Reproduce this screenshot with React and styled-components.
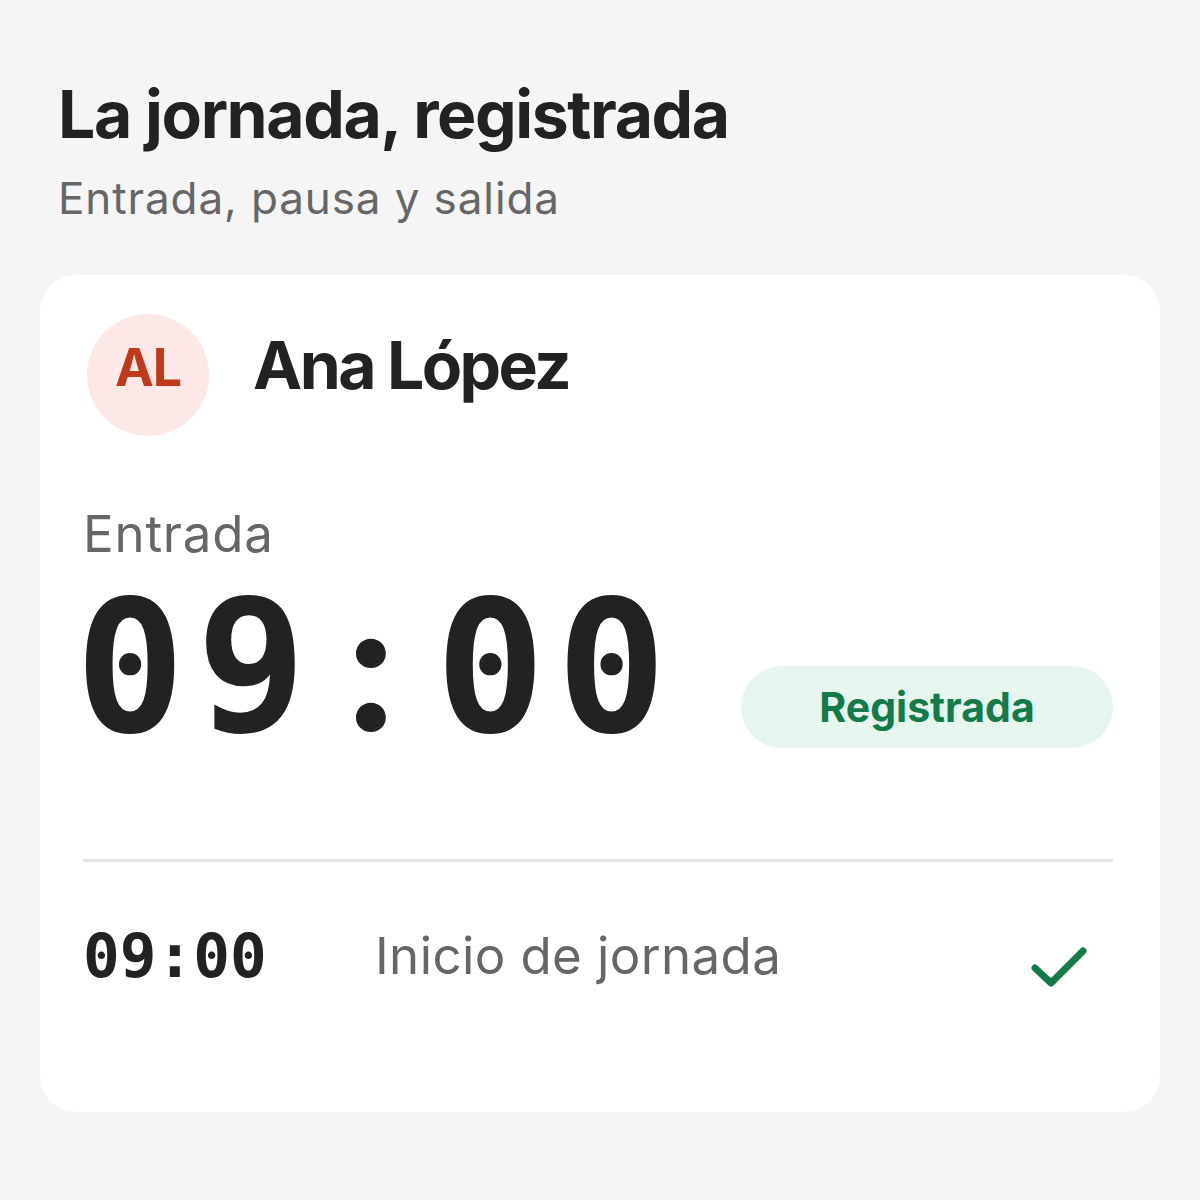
import React from "react";
import styled, { createGlobalStyle } from "styled-components";

const Global = createGlobalStyle`
  html, body {
    margin: 0;
    padding: 0;
    background: #f5f5f5;
  }
  body {
    font-family: "Inter", "Open Sans", sans-serif;
    color: #222;
  }
`;

const Page = styled.div`
  width: 1200px;
  min-height: 1200px;
  box-sizing: border-box;
  padding: 72px 40px 0 40px;
`;

const Title = styled.h1`
  margin: 0 0 0 18px;
  font-size: 66px;
  font-weight: 700;
  letter-spacing: -1.4px;
  line-height: 84px;
  color: #222;
`;

const Subtitle = styled.p`
  margin: 12px 0 0 18px;
  font-size: 44px;
  font-weight: 400;
  letter-spacing: 0.9px;
  line-height: 60px;
  color: #666;
`;

const Card = styled.section`
  margin-top: 47px;
  background: #fff;
  border-radius: 36px;
  padding: 39px 47px 0 43px;
  height: 837px;
  box-sizing: border-box;
  display: flex;
  flex-direction: column;
`;

const Header = styled.div`
  display: flex;
  align-items: center;
  gap: 44px;
  padding-left: 4px;
`;

const Avatar = styled.div`
  width: 122px;
  height: 122px;
  box-sizing: border-box;
  padding-bottom: 16px;
  border-radius: 50%;
  background: #fce8e6;
  color: #c0391b;
  font-size: 52px;
  font-weight: 700;
  letter-spacing: -1px;
  display: flex;
  align-items: center;
  justify-content: center;
`;

const Name = styled.h2`
  margin: 0 0 20px 0;
  font-size: 66px;
  font-weight: 700;
  letter-spacing: -2.6px;
  color: #222;
`;

const Label = styled.div`
  margin-top: 68px;
  font-size: 51px;
  letter-spacing: 0.8px;
  line-height: 60px;
  color: #666;
`;

const TimeRow = styled.div`
  margin-top: 6px;
  display: flex;
  align-items: center;
  justify-content: space-between;
`;

const BigTime = styled.div`
  font-family: "DejaVu Sans Mono", monospace;
  font-weight: 700;
  font-size: 183px;
  line-height: 180px;
  color: #222;
  letter-spacing: 11px;
  margin-left: -8px;
`;

const Colon = styled.span`
  font-family: "Lato", "DejaVu Sans Mono", sans-serif;
  font-weight: 900;
  display: inline-block;
  width: 118px;
  text-align: center;
`;

const Pill = styled.div`
  margin-top: 86px;
  width: 372px;
  height: 82px;
  border-radius: 41px;
  background: #e6f5ee;
  color: #137a4a;
  font-size: 41px;
  font-weight: 700;
  display: flex;
  align-items: center;
  justify-content: center;
`;

const Divider = styled.hr`
  margin: 101px 0 0 0;
  border: none;
  height: 3px;
  background: #e3e3e3;
`;

const Entry = styled.div`
  margin-top: 56px;
  display: flex;
  align-items: center;
`;

const EntryTime = styled.div`
  width: 292px;
  font-family: "DejaVu Sans Mono", monospace;
  font-weight: 700;
  font-size: 61px;
  color: #222;
`;

const EntryText = styled.div`
  flex: 1;
  font-size: 51px;
  letter-spacing: 0.4px;
  color: #666;
`;

const Check = () => (
  <svg width="60" height="48" viewBox="0 0 60 48" style={{ marginRight: 24, marginTop: 26 }}>
    <path d="M6 24 L22 39 L54 7" fill="none" stroke="#137a4a" strokeWidth="7" strokeLinecap="round" strokeLinejoin="round" />
  </svg>
);

export default function App() {
  return (
    <Page>
      <Global />
      <Title>La jornada, registrada</Title>
      <Subtitle>Entrada, pausa y salida</Subtitle>
      <Card>
        <Header>
          <Avatar>AL</Avatar>
          <Name>Ana López</Name>
        </Header>
        <Label>Entrada</Label>
        <TimeRow>
          <BigTime>
            09<Colon>:</Colon>00
          </BigTime>
          <Pill>Registrada</Pill>
        </TimeRow>
        <Divider />
        <Entry>
          <EntryTime>09:00</EntryTime>
          <EntryText>Inicio de jornada</EntryText>
          <Check />
        </Entry>
      </Card>
    </Page>
  );
}
